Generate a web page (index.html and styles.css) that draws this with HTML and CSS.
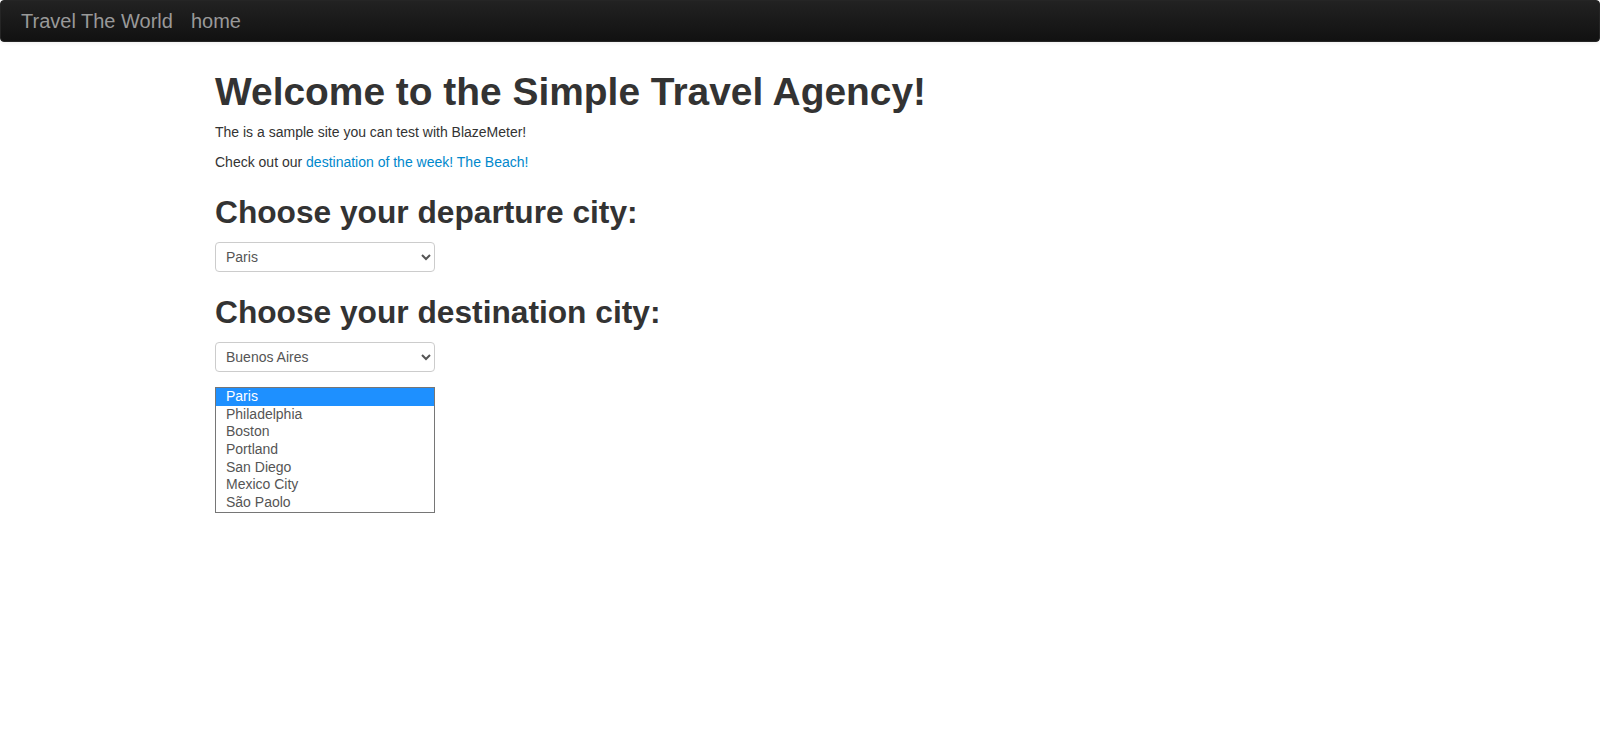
FILE: index.html
```html
<!DOCTYPE html>
<html>
<head>
<meta charset="utf-8">
<title>BlazeDemo</title>
<link rel="stylesheet" href="styles.css">
</head>
<body>
<div class="navbar">
  <div class="navbar-inner">
    <a class="brand" href="#">Travel The World</a>
    <ul class="nav">
      <li><a href="#">home</a></li>
    </ul>
  </div>
</div>

<div class="container">
  <div class="jumbotron">
    <h1>Welcome to the Simple Travel Agency!</h1>
    <p>The is a sample site you can test with BlazeMeter!</p>
    <p>Check out our <a href="#">destination of the week! The Beach!</a></p>
  </div>
</div>

<div class="container">
  <form class="form">
    <h2>Choose your departure city:</h2>
    <select name="fromPort" class="city-select">
      <option>Paris</option>
      <option>Philadelphia</option>
      <option>Boston</option>
      <option>Portland</option>
      <option>San Diego</option>
      <option>Mexico City</option>
      <option>São Paolo</option>
    </select>
    <h2>Choose your destination city:</h2>
    <select name="toPort" class="city-select">
      <option>Buenos Aires</option>
      <option>Rome</option>
      <option>London</option>
      <option>Berlin</option>
      <option>New York</option>
      <option>Dublin</option>
      <option>Cairo</option>
    </select>
    <ul class="popup">
      <li class="popup-item is-selected">Paris</li>
      <li class="popup-item">Philadelphia</li>
      <li class="popup-item">Boston</li>
      <li class="popup-item">Portland</li>
      <li class="popup-item">San Diego</li>
      <li class="popup-item">Mexico City</li>
      <li class="popup-item">São Paolo</li>
    </ul>
  </form>
</div>
</body>
</html>
```

FILE: styles.css
```css
html, body {
  margin: 0;
  padding: 0;
}

body {
  font-family: "Liberation Sans", Arial, Helvetica, sans-serif;
  font-size: 14px;
  line-height: 20px;
  color: #333333;
  background: #ffffff;
}

a {
  color: #0088cc;
  text-decoration: none;
}

.navbar {
  margin-bottom: 20px;
}

.navbar-inner {
  display: flex;
  align-items: flex-start;
  min-height: 40px;
  padding: 0 20px;
  background-color: #1b1b1b;
  background-image: linear-gradient(to bottom, #222222, #111111);
  border: 1px solid #252525;
  border-radius: 4px;
  box-shadow: 0 1px 4px rgba(0, 0, 0, 0.065);
}

.brand {
  display: block;
  padding: 10px 18px 10px 20px;
  margin-left: -20px;
  font-size: 20px;
  line-height: 20px;
  color: #999999;
}

.nav {
  display: flex;
  list-style: none;
  margin: 0;
  padding: 0;
}

.nav a {
  display: block;
  padding: 10px 15px 10px 0;
  font-size: 20px;
  line-height: 20px;
  color: #999999;
}

.container {
  width: 1170px;
  margin: 0 auto;
}

.container::before,
.container::after {
  display: table;
  content: "";
}

.container::after {
  clear: both;
}

h1, h2 {
  margin: 10px 0;
  font-weight: bold;
  line-height: 40px;
  color: inherit;
}

h1 {
  font-size: 38.9px;
}

h2 {
  font-size: 31.7px;
}

p {
  margin: 0 0 10px;
}

.link-text {
  color: #0088cc;
}

.form {
  margin: 0 0 20px;
}

.city-select {
  width: 220px;
  height: 30px;
  margin: 0 0 10px;
  padding: 4px 6px;
  font-family: "Liberation Sans", Arial, Helvetica, sans-serif;
  font-size: 14px;
  line-height: 30px;
  color: #555555;
  background-color: #ffffff;
  border: 1px solid #cccccc;
  border-radius: 4px;
  vertical-align: middle;
}

.popup {
  list-style: none;
  width: 218px;
  margin: 5px 0 0;
  padding: 0;
  border: 1px solid #767676;
  background: #ffffff;
}

.popup-item {
  height: 17.7px;
  padding: 0 10px;
  font-size: 14px;
  line-height: 17.7px;
  color: #555555;
}

.popup-item.is-selected {
  background: #1e90ff;
  color: #ffffff;
}
```
